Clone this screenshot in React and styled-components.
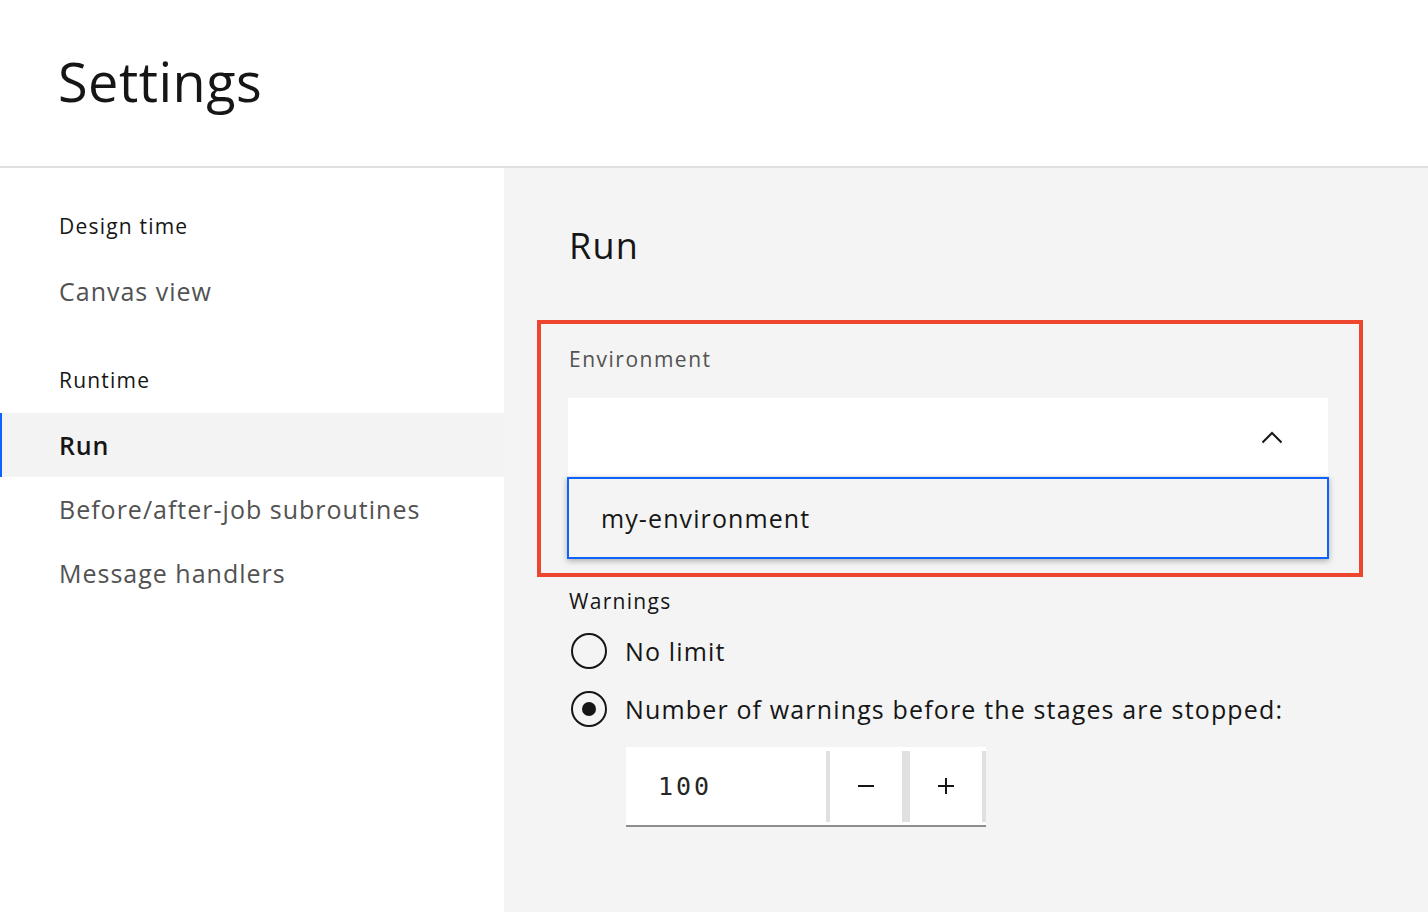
import React, { useState } from 'react';
import styled, { createGlobalStyle } from 'styled-components';

const GlobalStyle = createGlobalStyle`
  html, body {
    margin: 0;
    padding: 0;
    background: #ffffff;
  }
  body {
    font-family: 'Open Sans', 'Noto Sans', sans-serif;
    color: #161616;
  }
  * {
    box-sizing: border-box;
  }
`;

const navGroups = [
  { title: 'Design time', items: ['Canvas view'] },
  { title: 'Runtime', items: ['Run', 'Before/after-job subroutines', 'Message handlers'] },
];

const ChevronUp = () => (
  <svg width="22" height="13" viewBox="0 0 22 13" fill="none">
    <path d="M1.5 11.5 L11 2 L20.5 11.5" stroke="#161616" strokeWidth="2" />
  </svg>
);

const MinusIcon = () => (
  <svg width="18" height="18" viewBox="0 0 18 18">
    <line x1="1" y1="9" x2="17" y2="9" stroke="#161616" strokeWidth="2" />
  </svg>
);

const PlusIcon = () => (
  <svg width="18" height="18" viewBox="0 0 18 18">
    <line x1="1" y1="9" x2="17" y2="9" stroke="#161616" strokeWidth="2" />
    <line x1="9" y1="1" x2="9" y2="17" stroke="#161616" strokeWidth="2" />
  </svg>
);

const App = () => {
  const [limit, setLimit] = useState('count');
  const [count, setCount] = useState(100);

  return (
    <>
      <GlobalStyle />
      <Page>
        <Header>
          <Title>Settings</Title>
        </Header>
        <Body>
          <Sidebar>
            {navGroups.map((group) => (
              <NavGroup key={group.title}>
                <NavHeading>{group.title}</NavHeading>
                {group.items.map((item) => (
                  <NavItem key={item} $active={item === 'Run'}>
                    {item}
                  </NavItem>
                ))}
              </NavGroup>
            ))}
          </Sidebar>
          <Main>
            <Content>
              <SectionTitle>Run</SectionTitle>
              <Highlight>
                <FieldLabel>Environment</FieldLabel>
                <Dropdown>
                  <ChevronUp />
                </Dropdown>
                <Menu>
                  <MenuOption>my-environment</MenuOption>
                </Menu>
              </Highlight>
              <GroupLabel>Warnings</GroupLabel>
              <RadioRow onClick={() => setLimit('none')}>
                <RadioCircle $checked={limit === 'none'} />
                <RadioText>No limit</RadioText>
              </RadioRow>
              <RadioRow onClick={() => setLimit('count')}>
                <RadioCircle $checked={limit === 'count'} />
                <RadioText>Number of warnings before the stages are stopped:</RadioText>
              </RadioRow>
              <Stepper>
                <StepperValue>{count}</StepperValue>
                <StepDivider $w={4} />
                <StepButton onClick={() => setCount(count - 1)}>
                  <MinusIcon />
                </StepButton>
                <StepDivider $w={8} />
                <StepButton onClick={() => setCount(count + 1)}>
                  <PlusIcon />
                </StepButton>
                <StepDivider $w={4} />
              </Stepper>
            </Content>
          </Main>
        </Body>
      </Page>
    </>
  );
};

export default App;

const Page = styled.div`
  width: 100%;
  height: 100vh;
  display: flex;
  flex-direction: column;
  overflow: hidden;
`;

const Header = styled.header`
  height: 168px;
  flex-shrink: 0;
  display: flex;
  align-items: center;
  padding: 0 0 4px 58px;
  border-bottom: 2px solid #e0e0e0;
  background: #ffffff;
`;

const Title = styled.h1`
  margin: 0;
  font-size: 54px;
  font-weight: 400;
  line-height: 1;
  letter-spacing: 0.5px;
  color: #161616;
`;

const Body = styled.div`
  flex: 1;
  display: flex;
`;

const Sidebar = styled.nav`
  width: 504px;
  flex-shrink: 0;
  background: #ffffff;
  padding-top: 1px;
`;

const NavGroup = styled.div`
  padding-top: 39px;
`;

const NavHeading = styled.div`
  height: 36px;
  margin-bottom: 15px;
  padding-left: 59px;
  display: flex;
  align-items: center;
  font-size: 21px;
  letter-spacing: 1.2px;
  color: #161616;
`;

const NavItem = styled.div`
  height: 64px;
  display: flex;
  align-items: center;
  padding-left: 57px;
  font-size: 25px;
  letter-spacing: ${(p) => (p.$active ? 0.8 : 1)}px;
  font-weight: ${(p) => (p.$active ? 600 : 400)};
  color: ${(p) => (p.$active ? '#161616' : '#525252')};
  background: ${(p) => (p.$active ? '#f3f3f3' : 'transparent')};
  border-left: 2px solid ${(p) => (p.$active ? '#0f62fe' : 'transparent')};
  cursor: pointer;
`;

const Main = styled.main`
  flex: 1;
  background: #f4f4f4;
  padding: 0 64px;
`;

const Content = styled.div`
  width: 760px;
  display: flex;
  flex-direction: column;
`;

const SectionTitle = styled.h2`
  margin: 56px 0 0 1px;
  height: 43px;
  line-height: 43px;
  font-size: 36px;
  font-weight: 400;
  letter-spacing: 1.2px;
  color: #161616;
`;

const Highlight = styled.div`
  margin: 53px -35px 0 -31px;
  border: 4px solid #ee452f;
  padding: 21px 31px 14px 27px;
  display: flex;
  flex-direction: column;
`;

const FieldLabel = styled.div`
  height: 28px;
  line-height: 28px;
  font-size: 21px;
  letter-spacing: 1.5px;
  color: #525252;
  padding-left: 1px;
`;

const Dropdown = styled.div`
  margin-top: 25px;
  height: 78px;
  background: #ffffff;
  display: flex;
  align-items: center;
  justify-content: flex-end;
  padding-right: 45px;
`;

const Menu = styled.div`
  margin: 1px -1px 0;
  box-shadow: 0 2px 6px rgba(0, 0, 0, 0.3);
`;

const MenuOption = styled.div`
  height: 82px;
  display: flex;
  align-items: center;
  padding-left: 32px;
  border: 2px solid #0f62fe;
  background: #f4f4f4;
  font-size: 25px;
  letter-spacing: 1.1px;
  color: #161616;
`;

const GroupLabel = styled.div`
  margin-top: 10px;
  height: 28px;
  line-height: 28px;
  font-size: 21px;
  letter-spacing: 1.3px;
  color: #161616;
  padding-left: 1px;
`;

const RadioRow = styled.label`
  margin-top: 14px;
  height: 44px;
  display: flex;
  align-items: center;
  gap: 18px;
  cursor: pointer;
`;

const RadioCircle = styled.span`
  width: 36px;
  height: 36px;
  margin-left: 3px;
  border-radius: 50%;
  border: 2px solid #161616;
  display: flex;
  align-items: center;
  justify-content: center;
  flex-shrink: 0;

  &::after {
    content: '';
    width: 14px;
    height: 14px;
    border-radius: 50%;
    background: #161616;
    display: ${(p) => (p.$checked ? 'block' : 'none')};
  }
`;

const RadioText = styled.span`
  font-size: 25px;
  letter-spacing: 1.15px;
  color: #161616;
`;

const Stepper = styled.div`
  margin: 16px 0 0 58px;
  width: 360px;
  height: 80px;
  display: flex;
  background: #ffffff;
  border-bottom: 2px solid #8d8d8d;
`;

const StepperValue = styled.div`
  width: 200px;
  display: flex;
  align-items: center;
  padding-left: 32px;
  font-family: 'DejaVu Sans Mono', 'Liberation Mono', monospace;
  font-size: 25px;
  letter-spacing: 3px;
  color: #262626;
`;

const StepDivider = styled.span`
  width: ${(p) => p.$w}px;
  margin: 4px 0 3px;
  background: #e0e0e0;
`;

const StepButton = styled.button`
  width: 72px;
  border: none;
  padding: 0;
  background: #ffffff;
  display: flex;
  align-items: center;
  justify-content: center;
  cursor: pointer;
`;
